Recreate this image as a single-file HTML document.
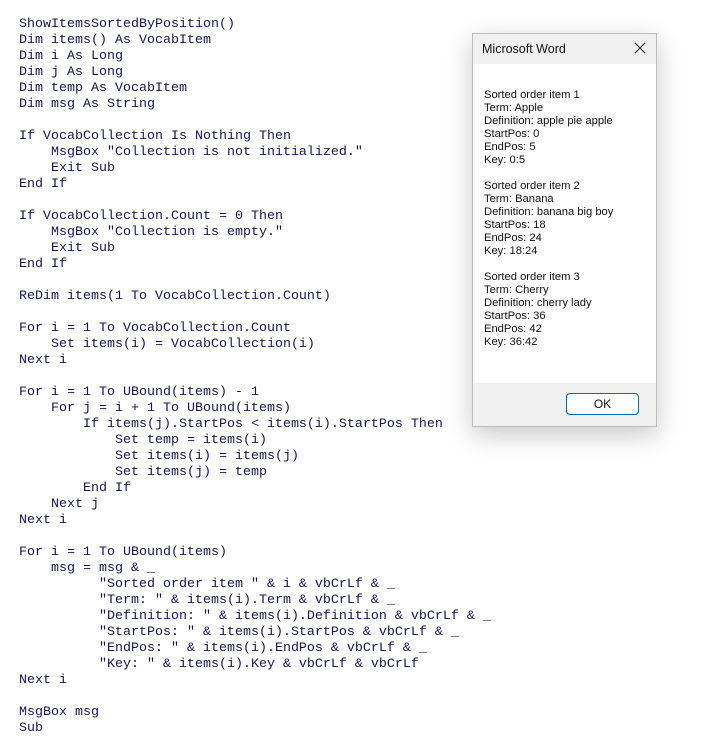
<!DOCTYPE html>
<html><head><meta charset="utf-8"><style>
body{margin:0;width:724px;height:737px;background:#fff;position:relative;overflow:hidden}
pre{position:absolute;left:19px;top:17px;margin:0;font-family:"Liberation Mono",monospace;font-size:13.33px;line-height:16px;color:#14145a}
.dlg{position:absolute;left:472px;top:33px;width:183px;height:392px;border:1px solid #bcbcbc;background:#fff;box-shadow:0 8px 24px rgba(0,0,0,.22);font-family:"Liberation Sans",sans-serif}
.tb{height:30px;background:#f0f0f0;font-size:12.5px;line-height:30px;padding-left:9px;color:#111;position:relative}
.x{position:absolute;right:10px;top:8px;width:12px;height:12px}
.body{position:absolute;left:11px;top:55px;font-size:11.2px;line-height:13px;color:#111;white-space:pre}
.ft{position:absolute;left:0;right:0;bottom:0;height:43px;background:#f0f0f0}
.ok{position:absolute;left:93px;top:10px;width:71px;height:20px;border:1px solid #0067c0;border-radius:4px;background:#fff;font-size:12px;line-height:20px;text-align:center;color:#111}
</style></head><body>
<pre>ShowItemsSortedByPosition()
Dim items() As VocabItem
Dim i As Long
Dim j As Long
Dim temp As VocabItem
Dim msg As String

If VocabCollection Is Nothing Then
    MsgBox "Collection is not initialized."
    Exit Sub
End If

If VocabCollection.Count = 0 Then
    MsgBox "Collection is empty."
    Exit Sub
End If

ReDim items(1 To VocabCollection.Count)

For i = 1 To VocabCollection.Count
    Set items(i) = VocabCollection(i)
Next i

For i = 1 To UBound(items) - 1
    For j = i + 1 To UBound(items)
        If items(j).StartPos &lt; items(i).StartPos Then
            Set temp = items(i)
            Set items(i) = items(j)
            Set items(j) = temp
        End If
    Next j
Next i

For i = 1 To UBound(items)
    msg = msg &amp; _
          "Sorted order item " &amp; i &amp; vbCrLf &amp; _
          "Term: " &amp; items(i).Term &amp; vbCrLf &amp; _
          "Definition: " &amp; items(i).Definition &amp; vbCrLf &amp; _
          "StartPos: " &amp; items(i).StartPos &amp; vbCrLf &amp; _
          "EndPos: " &amp; items(i).EndPos &amp; vbCrLf &amp; _
          "Key: " &amp; items(i).Key &amp; vbCrLf &amp; vbCrLf
Next i

MsgBox msg
Sub</pre>
<div class="dlg">
<div class="tb">Microsoft Word<svg class="x" viewBox="0 0 12 12"><path d="M1 1L11 11M11 1L1 11" stroke="#222" stroke-width="1.1"/></svg></div>
<div class="body">Sorted order item 1
Term: Apple
Definition: apple pie apple
StartPos: 0
EndPos: 5
Key: 0:5

Sorted order item 2
Term: Banana
Definition: banana big boy
StartPos: 18
EndPos: 24
Key: 18:24

Sorted order item 3
Term: Cherry
Definition: cherry lady
StartPos: 36
EndPos: 42
Key: 36:42</div>
<div class="ft"><div class="ok">OK</div></div>
</div>
</body></html>
